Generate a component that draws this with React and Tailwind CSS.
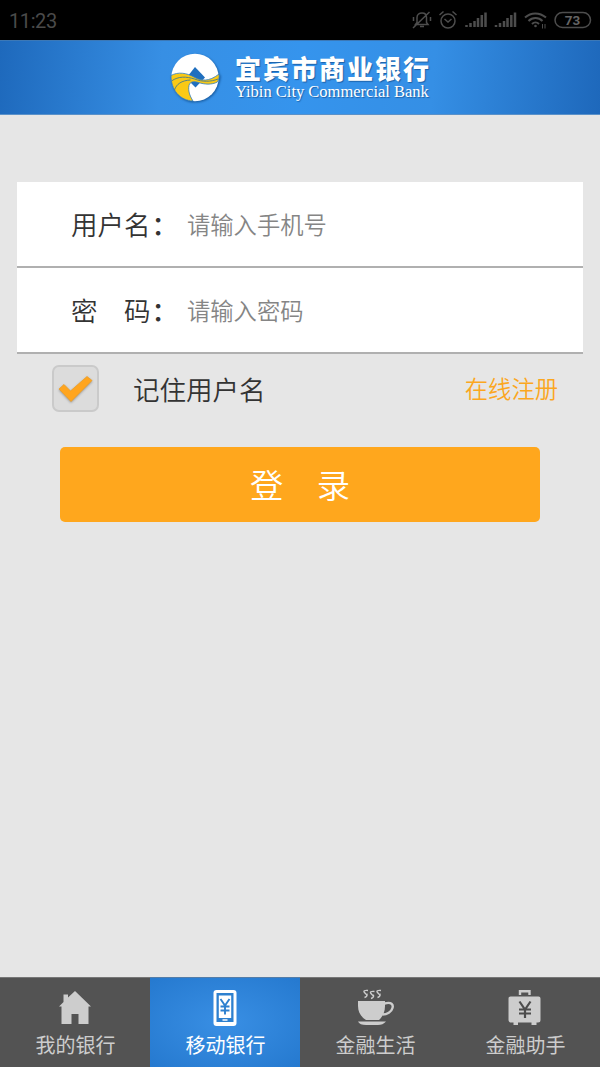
const tabs = [
  { label: "我的银行", icon: HomeIcon },
  { label: "移动银行", icon: PhoneIcon, active: true },
  { label: "金融生活", icon: CupIcon },
  { label: "金融助手", icon: CaseIcon },
];

function HomeIcon() {
  return (
    <svg width="34" height="38" viewBox="0 0 34 38" fill="#cdcdcd">
      <path d="M17 2 33 17.500H30.500V35H20.500V25H13.500V35H3.500V17.500H1L5.500 13V5.500H10V8.500Z" />
    </svg>
  );
}

function PhoneIcon() {
  return (
    <svg width="34" height="38" viewBox="0 0 34 38" fill="none">
      <rect x="5.500" y="1" width="23" height="36" rx="3" fill="#fff" />
      <rect x="8.500" y="4" width="17" height="29" fill="#2d80cf" />
      <rect x="10.800" y="6.500" width="12.400" height="22.500" fill="#fff" />
      <path d="m12.500 10 4.500 6.500 4.500-6.500M17 16v9.500M12.500 17.500h9M12.500 21.500h9" stroke="#2d80cf" strokeWidth="1.900" />
      <path d="M14.500 31h5" stroke="#fff" strokeWidth="1.500" />
    </svg>
  );
}

function CupIcon() {
  return (
    <svg width="38" height="38" viewBox="0 0 38 38" fill="none">
      <g stroke="#cdcdcd" strokeWidth="1.400">
        <path d="M12 1.500Q6.500 1 8.500 3.500T11 5.500Q11.500 7.500 8.500 8.500" />
        <path d="M18.500 2.500Q13 2 15 4.500T17.500 6.500Q18 8.500 15 9.500" />
        <path d="M25 1.500Q19.500 1 21.500 3.500T24 5.500Q24.500 7.500 21.500 8.500" />
      </g>
      <path d="M2 12h27v5c0 7-3 11-6 14H10C5 28 2 23 2 17Z" fill="#cdcdcd" />
      <path d="M28.500 14.500c7-2 9 1 8 4.500-1 4-5.500 6.500-10 6.500" stroke="#cdcdcd" strokeWidth="2.400" />
      <path d="M2 32.500h28c-2 2.500-5 3.500-8 3.500H10c-4 0-7-1-8-3.500Z" fill="#cdcdcd" />
    </svg>
  );
}

function CaseIcon() {
  return (
    <svg width="34" height="38" viewBox="0 0 34 38" fill="none">
      <path d="M12 6V2.300h9.500V6" stroke="#cdcdcd" strokeWidth="2.400" />
      <path d="M2.500 7.500h28a2 2 0 0 1 2 2V31a2.500 2.500 0 0 1-2.500 2.500h-1.500V36H23.500v-2.500H10V36H5.500v-2.500H3.500A2.500 2.500 0 0 1 .500 31V9.500a2 2 0 0 1 2-2Z" fill="#cdcdcd" />
      <path d="m11.500 12.500 5.500 8 5.500-8M17 20v9M11 20.500h12M11 24.500h12" stroke="#4c4c4c" strokeWidth="2.200" />
    </svg>
  );
}

function StatusIcons() {
  return (
    <svg width="182" height="24" viewBox="412 8 182 24" fill="none" stroke="#4d4d4d" strokeWidth="1.500">
      <path d="M415.500 24.500h12.500l-1.500-2v-5c0-3-2-4.500-4.500-4.500s-5 1.500-5 4.500v5ZM420 26.500h4M429.500 12 413 28M413.500 17v4M430.500 17v4" />
      <circle cx="448" cy="21" r="7" />
      <path d="m444.500 19 3.500 3 3.500-3M439.500 15l4-3.500M456.500 15l-4-3.500" />
      <g strokeWidth="2.500">
        <path d="M466.500 27v-2M470.500 27v-4M474.500 27v-6M478 27V18M481.800 27v-12M485.500 27V12.500" />
        <path d="M496 27v-2M500 27v-4M504 27v-6M507.500 27V18M511.300 27v-12M515 27V12.500" />
      </g>
      <path d="M525 17.500c6-5.500 14.500-5.500 21 0M528.500 21c4-4 10-4 14 0M532 24c2-2 5-2 7 0" strokeWidth="2" />
      <circle cx="535.500" cy="26" r="1.300" fill="#4d4d4d" stroke="none" />
      <path d="M542.500 24v4.500M545 24v4.500" strokeWidth="1" />
      <rect x="555" y="12.500" width="35.500" height="15" rx="7.500" />
      <text x="572.500" y="24.800" textAnchor="middle" fill="#656565" stroke="none" fontSize="13.500" fontWeight="700" fontFamily="Roboto, sans-serif">73</text>
    </svg>
  );
}

function Logo() {
  return (
    <svg width="50" height="50" viewBox="0 0 50 50" className="drop-shadow-[1px_1px_1px_#17599d]">
      <circle cx="25" cy="24.500" r="23.700" fill="#fff" />
      <path d="M25 14 35 24.500 25.500 34.500 16.500 25.500 19.500 21Z" fill="#1f6fbf" />
      <path
        d="M1 22.500C8 18.500 17 20 24 24s15 5 25-3c.5 3 0 5-1.500 8-6 3-13 2.500-19 .5-5-1.500-8.500-1-9.500 3-1 5 .5 10 4 15.500C10 47.500 1 37 1 22.500Z"
        fill="#fac915"
        stroke="#2f7cc4"
        strokeWidth=".8"
      />
      <path d="M1.500 28c7-5 15-4.500 23-2 8 3 16 3 23.500 0M4.500 37c2-6 7-9.500 16-10" fill="none" stroke="#4a7c88" strokeWidth=".9" />
    </svg>
  );
}

export default function App() {
  return (
    <div className="flex h-[1067px] w-[600px] flex-col overflow-hidden bg-[#e6e6e6] font-['Noto_Sans_CJK_SC',sans-serif]">
      <div className="flex h-10 shrink-0 items-center justify-between bg-black pr-1.5 pl-[9px]">
        <span className="pt-0.5 font-['Roboto',sans-serif] text-[20px] tracking-[-0.4px] text-[#4a4a4a]">11:23</span>
        <StatusIcons />
      </div>

      <header className="flex h-[75px] shrink-0 border-y border-t-[#3c78b6] border-b-[#5a91c9] bg-[linear-gradient(95deg,#1e69bc_0%,#378fe4_27%,#3594ed_50%,#358fe5_72%,#1e68bb_100%)] pl-[170px]">
        <div className="flex pt-3">
          <Logo />
        </div>
        <div className="ml-[15px] flex flex-col pt-[13px] text-white [text-shadow:1px_1px_1px_#1c61a8]">
          <span className="text-[26px] leading-[28px] font-black tracking-[2px] whitespace-nowrap">宜宾市商业银行</span>
          <span className="mt-px font-['Liberation_Serif',serif] text-[16.5px] leading-[18px] whitespace-nowrap">Yibin City Commercial Bank</span>
        </div>
      </header>

      <main className="flex flex-1 flex-col px-[17px] pt-[67px]">
        <div className="flex h-[86px] items-center border-b-2 border-[#b0b0b0] bg-white pl-[54px]">
          <label className="flex w-[116px] text-[26.5px] font-[350] text-[#333]">
            用户名<span className="ml-px font-medium">：</span>
          </label>
          <input className="w-[360px] text-[23.3px] font-[350] outline-none placeholder:text-[#858585]" placeholder="请输入手机号" />
        </div>
        <div className="flex h-[86px] items-center border-b-2 border-[#b0b0b0] bg-white pl-[54px]">
          <label className="flex w-[116px] text-[26.5px] font-[350] text-[#333]">
            密　码<span className="ml-px font-medium">：</span>
          </label>
          <input className="w-[360px] text-[23.3px] font-[350] outline-none placeholder:text-[#858585]" placeholder="请输入密码" />
        </div>

        <div className="flex h-[69px] items-center pr-[25px] pl-[35px]">
          <span className="flex size-[47px] items-center justify-center rounded-[7px] border-2 border-[#cacaca] bg-[#dcdcdc]">
            <svg width="35" height="28" viewBox="0 0 35 28" className="drop-shadow-[0_1px_1px_#999]">
              <path d="m1 14 5-4.500 6.500 6.500L29 1.500l5 4L13 26.500Z" fill="#ffa51f" stroke="#ed9f27" strokeWidth=".8" strokeLinejoin="round" />
            </svg>
          </span>
          <span className="ml-[34px] text-[26.5px] font-[350] text-[#333]">记住用户名</span>
          <a className="ml-auto text-[23.3px] font-[350] text-[#fba71f]">在线注册</a>
        </div>

        <button className="mx-[43px] mt-6 h-[75px] rounded-[5px] bg-[#ffa71d] pb-0.5 text-[33.3px] font-[350] text-white">登　录</button>
      </main>

      <nav className="grid h-[90px] shrink-0 grid-cols-4">
        {tabs.map((tab) => {
          const Icon = tab.icon;
          return (
            <div
              key={tab.label}
              className={`flex flex-col items-center border-t pt-[11px] ${
                tab.active
                  ? "border-[#547da8] bg-[radial-gradient(ellipse_at_center,#398fe4_0%,#2579cf_100%)] text-white"
                  : "border-[#777] bg-[#535353] text-[#cdcdcd]"
              }`}
            >
              <Icon />
              <span className="mt-[3px] pl-px text-[20px] leading-[30px]">{tab.label}</span>
            </div>
          );
        })}
      </nav>
    </div>
  );
}
